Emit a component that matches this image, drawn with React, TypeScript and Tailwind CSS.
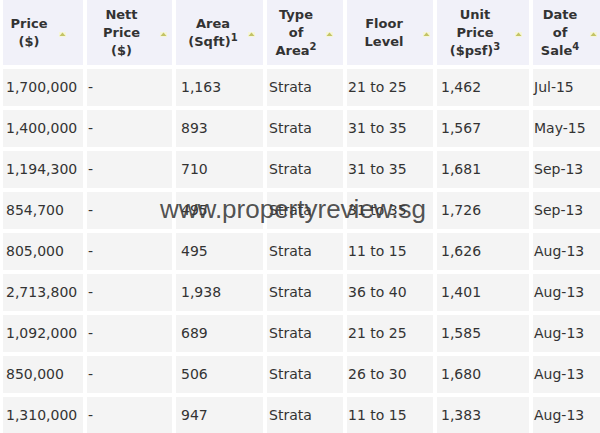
const font = { fontFamily: '"DejaVu Sans", Verdana, sans-serif' }

type Col = {
  cell: string
  lines: React.ReactNode[]
  pl: string
  w: string
  ml: string
  bodyPl: string
}

const cols: Col[] = [
  { cell: "w-[80px]", lines: ["Price", "($)"], pl: "pl-[4px]", w: "w-[44px]", ml: "ml-[8px]", bodyPl: "pl-[3px]" },
  { cell: "w-[85px]", lines: ["Nett", "Price", "($)"], pl: "pl-[12px]", w: "w-[45px]", ml: "ml-[16px]", bodyPl: "pl-[1px]" },
  {
    cell: "w-[87px]",
    lines: ["Area", <>(Sqft)<sup className="text-[10px] font-bold">1</sup></>],
    pl: "pl-[9px]",
    w: "w-[56px]",
    ml: "ml-[7px]",
    bodyPl: "pl-[5px]",
  },
  {
    cell: "w-[76px]",
    lines: ["Type", "of", <>Area<sup className="text-[10px] font-bold">2</sup></>],
    pl: "pl-[5px]",
    w: "w-[48px]",
    ml: "ml-[6px]",
    bodyPl: "pl-[2px]",
  },
  { cell: "w-[86px]", lines: ["Floor", "Level"], pl: "pl-[15px]", w: "w-[44px]", ml: "ml-[17px]", bodyPl: "pl-[1px]" },
  {
    cell: "w-[92px]",
    lines: ["Unit", "Price", <>($psf)<sup className="text-[10px] font-bold">3</sup></>],
    pl: "pl-[5px]",
    w: "w-[66px]",
    ml: "ml-[7px]",
    bodyPl: "pl-[4px]",
  },
  {
    cell: "w-[67px]",
    lines: ["Date", "of", <>Sale<sup className="text-[10px] font-bold">4</sup></>],
    pl: "pl-[6px]",
    w: "w-[42px]",
    ml: "ml-[9px]",
    bodyPl: "pl-[1px]",
  },
]

const rows = [
  ["1,700,000", "-", "1,163", "Strata", "21 to 25", "1,462", "Jul-15"],
  ["1,400,000", "-", "893", "Strata", "31 to 35", "1,567", "May-15"],
  ["1,194,300", "-", "710", "Strata", "31 to 35", "1,681", "Sep-13"],
  ["854,700", "-", "495", "Strata", "31 to 35", "1,726", "Sep-13"],
  ["805,000", "-", "495", "Strata", "11 to 15", "1,626", "Aug-13"],
  ["2,713,800", "-", "1,938", "Strata", "36 to 40", "1,401", "Aug-13"],
  ["1,092,000", "-", "689", "Strata", "21 to 25", "1,585", "Aug-13"],
  ["850,000", "-", "506", "Strata", "26 to 30", "1,680", "Aug-13"],
  ["1,310,000", "-", "947", "Strata", "11 to 15", "1,383", "Aug-13"],
]

function SortArrow({ className }: { className: string }) {
  return (
    <svg width="7" height="5" viewBox="0 0 7 5" className={`shrink-0 ${className}`}>
      <rect x="-1" y="-1" width="9" height="7" fill="#f6f6d8" />
      <path d="M3.5 0.5 L6.5 4 L0.5 4 Z" fill="#c4c466" />
    </svg>
  )
}

export default function App() {
  return (
    <div className="relative w-[600px] h-[433px] overflow-hidden bg-white text-[#333]" style={font}>
      <div className="flex flex-col gap-[4px] pl-[3px]">
        <div className="flex gap-[4px] h-[65px]">
          {cols.map((c, i) => (
            <div key={i} className={`${c.cell} shrink-0 bg-[#f1f1f9] flex items-center ${c.pl}`}>
              <div className={`${c.w} shrink-0 text-center text-[13px] font-bold leading-[18px] text-[#333]`}>
                {c.lines.map((l, j) => (
                  <div key={j} className="whitespace-nowrap">
                    {l}
                  </div>
                ))}
              </div>
              <SortArrow className={`${c.ml} mt-[3px]`} />
            </div>
          ))}
        </div>
        {rows.map((r, i) => (
          <div key={i} className="flex gap-[4px] h-[37px]">
            {r.map((v, j) => (
              <div
                key={j}
                className={`${cols[j].cell} shrink-0 bg-[#f4f4f4] flex items-center text-[14px] text-[#333] whitespace-nowrap ${cols[j].bodyPl}`}
              >
                {v}
              </div>
            ))}
          </div>
        ))}
      </div>
      <div
        className="absolute left-[160px] top-[196px] text-[26px] leading-[26px] text-[#3c3c3c]/90 whitespace-nowrap pointer-events-none"
        style={{ fontFamily: '"Liberation Sans", Arial, sans-serif' }}
      >
        www.propertyreview.sg
      </div>
    </div>
  )
}
